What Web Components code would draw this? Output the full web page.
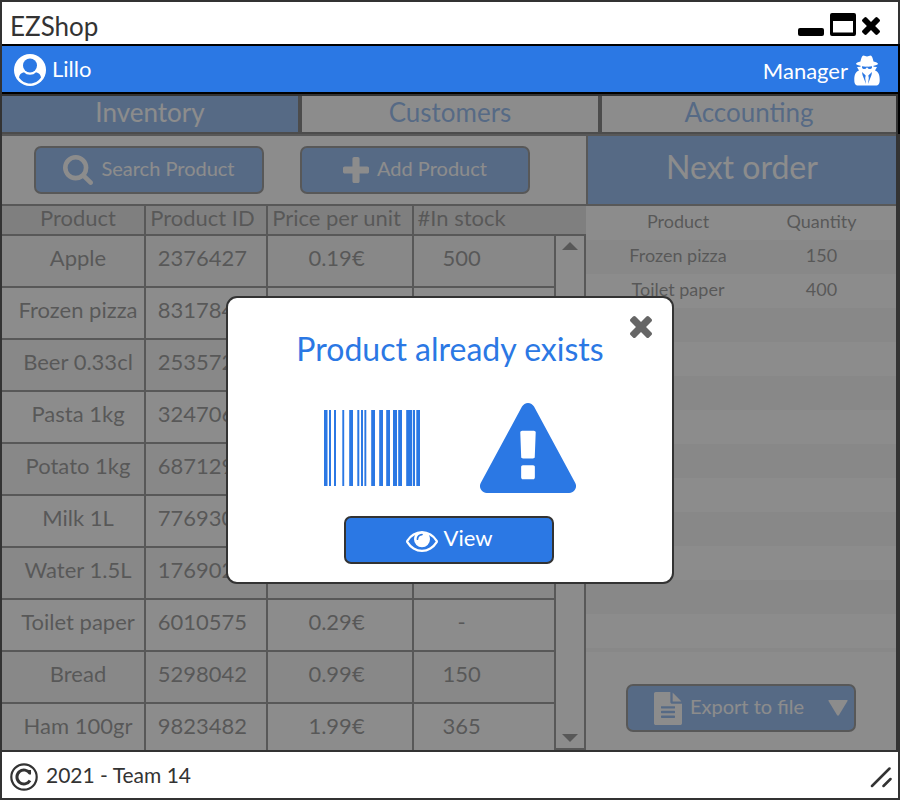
<!DOCTYPE html>
<html lang="en">
<head>
<meta charset="utf-8">
<meta name="viewport" content="width=device-width, initial-scale=1">
<title>EZShop</title>
<style>
  :root { --ink: #333; --blue: #2b78e4; --line: 2px solid #333; }
  body { margin: 0; font-family: Lato, "Liberation Sans", sans-serif; color: var(--ink); }
</style>
</head>
<body>
<ez-window>
  <title-bar slot="title">EZShop</title-bar>
  <user-bar slot="user" name="Lillo" role-name="Manager"></user-bar>
  <tab-bar></tab-bar>
  <split-view>
    <stock-panel slot="left"></stock-panel>
    <order-panel slot="right"></order-panel>
  </split-view>
  <modal-layer slot="modal" heading="Product already exists">
    <ez-icon name="barcode"></ez-icon>
    <ez-icon name="warning"></ez-icon>
    <ez-button slot="action" icon="eye" class="large">View</ez-button>
  </modal-layer>
  <footer-bar slot="footer">2021 - Team 14</footer-bar>
</ez-window>

<script>
const base = '<style>*,*::before,*::after{box-sizing:border-box}button{font:inherit;color:inherit;margin:0;padding:0;border:0;background:none;cursor:pointer}</style>';
function define(name, render, ready) {
  customElements.define(name, class extends HTMLElement {
    connectedCallback() {
      if (this.shadowRoot) return;
      const root = this.attachShadow({ mode: 'open' });
      const template = document.createElement('template');
      template.innerHTML = base + render(this);
      root.append(template.content.cloneNode(true));
      if (ready) ready(this, root);
    }
  });
}

const bars = [[0,3.5],[5,2],[10,2],[18.3,1.9],[25.2,3.8],[33.3,2],[37,2],[40.4,1.9],[47.2,3.8],[55.2,3.8],[62.2,3.8],[69,4],[74.2,3.8],[82.2,6],[89,2],[92.3,3.7]];
const icons = {
  search: [30, 30, '64 128 1664 1664', '<path d="M1216 832q0-185-131.5-316.5t-316.5-131.5-316.5 131.5-131.5 316.5 131.5 316.5 316.5 131.5 316.5-131.5 131.5-316.5zm512 832q0 52-38 90t-90 38q-54 0-90-38l-343-342q-179 124-399 124-143 0-273.5-55.5t-225-150-150-225-55.5-273.5 55.5-273.5 150-225 225-150 273.5-55.5 273.5 55.5 225 150 150 225 55.5 273.5q0 220-124 399l343 343q37 37 37 90z"/>'],
  plus: [26, 26, '192 128 1408 1408', '<path d="M1600 736v192q0 40-28 68t-68 28h-416v416q0 40-28 68t-68 28h-192q-40 0-68-28t-28-68v-416h-416q-40 0-68-28t-28-68v-192q0-40 28-68t68-28h416v-416q0-40 28-68t68-28h192q40 0 68 28t28 68v416h416q40 0 68 28t28 68z"/>'],
  times: [22, 22, '302 366 1188 1188', '<path d="M1490 1322q0 40-28 68l-136 136q-28 28-68 28t-68-28l-294-294-294 294q-28 28-68 28t-68-28l-136-136q-28-28-28-68t28-68l294-294-294-294q-28-28-28-68t28-68l136-136q28-28 68-28t68 28l294 294 294-294q28-28 68-28t68 28l136 136q28 28 28 68t-28 68l-294 294 294 294q28 28 28 68z"/>'],
  eye: [32, 21, '0 384 1792 1152', '<path d="M1664 960q-152-236-381-353 61 104 61 225 0 185-131.5 316.5t-316.5 131.5-316.5-131.5-131.5-316.5q0-121 61-225-229 117-381 353 133 205 333.5 326.5t434.5 121.5 434.5-121.5 333.5-326.5zm-720-384q0-20-14-34t-34-14q-125 0-214.5 89.5t-89.5 214.5q0 20 14 34t34 14 34-14 14-34q0-86 61-147t147-61q20 0 34-14t14-34zm848 384q0 34-20 69-140 230-376.5 368.5t-499.5 138.5-499.5-139-376.5-368q-20-35-20-69t20-69q140-229 376.5-368t499.5-139 499.5 139 376.5 368q20 35 20 69z"/>'],
  file: [28, 33, '128 0 1536 1792', '<path d="M1596 476q14 14 28 36h-472v-472q22 14 36 28zm-476 164h544v1056q0 40-28 68t-68 28h-1344q-40 0-68-28t-28-68v-1600q0-40 28-68t68-28h800v544q0 40 28 68t68 28zm160 736v-64q0-14-9-23t-23-9h-704q-14 0-23 9t-9 23v64q0 14 9 23t23 9h704q14 0 23-9t9-23zm0-256v-64q0-14-9-23t-23-9h-704q-14 0-23 9t-9 23v64q0 14 9 23t23 9h704q14 0 23-9t9-23zm0-256v-64q0-14-9-23t-23-9h-704q-14 0-23 9t-9 23v64q0 14 9 23t23 9h704q14 0 23-9t9-23z"/>'],
  warning: [96, 90, '0 0 1792 1664', '<path d="M1024 1375v-190q0-14-9.500-23.500t-22.500-9.500h-192q-13 0-22.500 9.500t-9.500 23.500v190q0 14 9.500 23.500t22.500 9.500h192q13 0 22.500-9.500t9.500-23.500zm-2-374l18-459q0-12-10-19-13-11-24-11h-220q-11 0-24 11-10 7-10 21l17 457q0 10 10 16.500t24 6.500h185q14 0 23.500-6.500t10.500-16.500zm-14-934l768 1408q35 63-2 126-17 29-46.500 46t-63.500 17h-1536q-34 0-63.500-17t-46.500-46q-37-63-2-126l768-1408q17-31 47-49t65-18 65 18 47 49z"/>'],
  barcode: [96, 76, '0 0 96 76', bars.map(([x, w]) => `<rect x="${x}" width="${w}" height="76"/>`).join('')],
  user: [32, 32, '0 0 32 32', '<circle cx="16" cy="16" r="16"/><circle cx="16" cy="11.500" r="7" fill="#2b78e4"/><path fill="#2b78e4" d="M10 18.300C7 18.700 5.300 21 5 23.600C7.500 27.400 11.500 29.600 16 29.600S24.500 27.400 27 23.600C26.700 21 25 18.700 22 18.300C20.500 20 18.500 20.800 16 20.800S11.500 20 10 18.300Z"/>'],
  secret: [26, 31, '0 0 26 31', '<path fill-rule="evenodd" d="M9.500.5C8 .5 7 4 6.500 6.500C4 7 2 8 2 8.800C2 9.800 5 10.500 6.500 10.800L6.500 11.800L3 12L5 15.500C1.500 17 .3 19.500.3 25C.3 28.500 1.200 30.500 4.500 30.500H21.500C24.800 30.500 25.700 28.500 25.700 25C25.700 19.500 24.500 17 21 15.500L23 12L19.500 11.800L19.500 10.800C21 10.500 24 9.800 24 8.800C24 8 22 7 19.500 6.500C19 4 18 .5 16.500.5C15.500.5 14.300 1.500 13 1.500S10.500.5 9.500.5ZM8 11.200L12 11.700Q13 11.300 14 11.700L18 11.200V12.500Q17.500 14 16 14Q14 14 13.300 12.500H12.700Q12 14 10 14Q8.500 14 8 12.500ZM8 17L11.700 20.500L11.200 23L12 29L8.500 20ZM18 17L14.300 20.500L14.800 23L14 29L17.500 20Z"/>'],
  minimize: [26, 8, '0 0 26 8', '<rect width="26" height="8" rx="2"/>'],
  maximize: [26, 23, '0 0 26 23', '<path fill-rule="evenodd" d="M2 0H24Q26 0 26 2V21Q26 23 24 23H2Q0 23 0 21V2Q0 0 2 0ZM3 8V19.500H23V8Z"/>'],
  copyright: [28, 28, '0 0 28 28', '<g fill="none" stroke="currentColor"><circle cx="14" cy="14" r="12.700" stroke-width="2.200"/><path d="M20 10.500A7 7 0 1 0 20 17.500" stroke-width="3"/><path d="M20 7V11.500" stroke-width="2"/></g>'],
  grip: [22, 22, '0 0 22 22', '<path d="M2 20L19.500 2.500M13.500 20L20.500 13" fill="none" stroke="currentColor" stroke-width="2.500" stroke-linecap="round"/>'],
  caret: [20, 16, '0 0 20 16', '<path d="M1 0H19Q20 0 19.500 1L11 15Q10 16.500 9 15L.5 1Q0 0 1 0Z"/>'],
  up: [16, 8, '0 0 16 8', '<path d="M0 8L8 0L16 8Z"/>'],
  down: [16, 8, '0 0 16 8', '<path d="M0 0L8 8L16 0Z"/>']
};
define('ez-icon', el => {
  const [w, h, box, art] = icons[el.getAttribute('name')];
  return `<style>:host{display:inline-flex;flex:none}svg{display:block;fill:currentColor}</style>
  <svg width="${w}" height="${h}" viewBox="${box}" preserveAspectRatio="none" aria-hidden="true">${art}</svg>`;
});

define('ez-button', el => `<style>
  :host{display:block;width:230px;font-size:20px;line-height:24px;color:#fff}
  :host(.large){width:210px;font-size:22px}
  button{width:100%;height:48px;display:flex;align-items:center;justify-content:center;gap:8px;background:var(--blue);border:var(--line);border-radius:7px}
  span{padding-bottom:4px}
  :host(.large) button{gap:6px;padding-top:2px}
  :host(.large) span{padding-bottom:6px}
  :host([menu]) button{justify-content:flex-start;padding:0 6px 0 26px}
  .caret{margin-left:auto}
</style><button type="button"${el.hasAttribute('menu') ? ' aria-haspopup="menu"' : ''}><ez-icon name="${el.getAttribute('icon')}"></ez-icon><span><slot></slot></span>${el.hasAttribute('menu') ? '<ez-icon class="caret" name="caret"></ez-icon>' : ''}</button>`);

define('ez-window', () => `<style>
  :host{display:flex;flex-direction:column;height:100vh;min-height:640px;min-width:720px;border:var(--line);background:#fff;box-sizing:border-box}
  main{flex:1;min-height:0;display:flex;flex-direction:column;position:relative;border-top:var(--line);border-right:var(--line)}
</style><slot name="title"></slot><slot name="user"></slot><main><slot></slot><slot name="modal"></slot></main><slot name="footer"></slot>`);

define('title-bar', () => `<style>
  :host{display:block}
  header{display:flex;align-items:center;height:42px;padding:6px 18px 0 8px}
  h1{flex:1;margin:0;font-size:26px;font-weight:400;line-height:32px}
  div{display:flex;align-items:flex-end;gap:6px;height:24px;margin-bottom:4px;color:#000}
  button{display:flex}
</style><header><h1><slot></slot></h1><div>
<button type="button" aria-label="Minimize"><ez-icon name="minimize"></ez-icon></button>
<button type="button" aria-label="Maximize"><ez-icon name="maximize"></ez-icon></button>
<button type="button" aria-label="Close"><svg width="18" height="20" viewBox="302 366 1188 1188" aria-hidden="true">${icons.times[3]}</svg></button></div></header>`);

define('user-bar', el => `<style>
  :host{display:block;margin-right:-2px}
  div{display:flex;align-items:center;justify-content:space-between;height:50px;padding:2px 18px 0 12px;border:2px solid #000;border-left:0;background:var(--blue);color:#fff;font-size:22px;line-height:26px}
  span{display:flex;align-items:center;gap:6px}
  b{font-weight:400;padding-bottom:2px}
  .role b{padding:2px 0 0}
</style><div><span><ez-icon name="user"></ez-icon><b>${el.getAttribute('name')}</b></span>
<span class="role"><b>${el.getAttribute('role-name')}</b><ez-icon name="secret"></ez-icon></span></div>`);

define('tab-bar', () => `<style>
  :host{display:block;position:relative}
  :host::after{content:"";position:absolute;inset:-2px -4px 2px auto;width:2px;background:#000}
  nav{display:grid;grid-template-columns:296fr 296fr 294fr;column-gap:4px;background:#000;border-bottom:2px solid #000;box-shadow:0 2px var(--ink);margin-bottom:2px}
  button{height:36px;background:#fff;color:var(--blue);font-size:26px;line-height:32px;padding-bottom:4px}
  .on{background:var(--blue);color:#fff}
</style><nav role="tablist"><button role="tab" aria-selected="true" class="on">Inventory</button><button role="tab" aria-selected="false">Customers</button><button role="tab" aria-selected="false">Accounting</button></nav>`);

define('split-view', () => `<style>
  :host{flex:1;min-height:0;display:grid;grid-template-columns:584fr 310fr;grid-template-rows:minmax(0,1fr)}
</style><slot name="left"></slot><slot name="right"></slot>`);

const stock = [['Apple','2376427','0.19€','500'],['Frozen pizza','8317845','',''],['Beer 0.33cl','2535721','',''],['Pasta 1kg','3247065','',''],['Potato 1kg','6871294','',''],['Milk 1L','7769301','',''],['Water 1.5L','1769023','',''],['Toilet paper','6010575','0.29€','-'],['Bread','5298042','0.99€','150'],['Ham 100gr','9823482','1.99€','365']];
define('stock-panel', () => `<style>
  :host{display:flex;flex-direction:column;min-width:0;overflow:hidden}
  .tools{flex:none;display:flex;gap:36px;height:70px;padding:10px 32px;border-bottom:var(--line)}
  .list{flex:1;min-height:0;display:flex;background:#ccc}
  .rows{flex:1;min-width:0}
  table{width:100%;table-layout:fixed;border-collapse:separate;border-spacing:0;font-size:22px;line-height:24px}
  col:nth-child(1){width:26%}col:nth-child(2){width:22%}col:nth-child(3){width:26.400%}
  th,td{font-weight:400;text-align:center;white-space:nowrap;border-right:var(--line);border-bottom:var(--line);padding:0 7px 0 0}
  th{height:30px;padding-bottom:4px}
  td{height:52px;padding-bottom:6px;background:#fff}
  tr:nth-child(odd) td{background:#eee}
  th:first-child,td:first-child{padding-left:10px;padding-right:0}
  td:last-child{padding-right:45px}
  th:last-child{padding-right:47px;border-right:0}
  .bar{width:30px;margin-top:28px;display:flex;flex-direction:column;justify-content:space-between;background:#fff;border:var(--line);border-left:0;color:var(--ink)}
  .bar button{display:flex;justify-content:center;padding:6px 0}
</style><div class="tools"><ez-button icon="search">Search Product</ez-button><ez-button icon="plus">Add Product</ez-button></div>
<div class="list"><div class="rows"><table><colgroup><col><col><col><col></colgroup><thead><tr><th>Product</th><th>Product ID</th><th>Price per unit</th><th>#In stock</th></tr></thead>
<tbody>${stock.map(r => `<tr>${r.map(c => `<td>${c}</td>`).join('')}</tr>`).join('')}</tbody></table></div>
<div class="bar"><button type="button" aria-label="Scroll up"><ez-icon name="up"></ez-icon></button><button type="button" aria-label="Scroll down"><ez-icon name="down"></ez-icon></button></div></div>`);

define('order-panel', () => `<style>
  :host{display:flex;flex-direction:column;min-width:0}
  h2{margin:0;height:70px;font-size:32px;line-height:62px;font-weight:400;text-align:center;color:#fff;background:var(--blue);border-left:var(--line);border-bottom:var(--line)}
  .list{flex:1;background:repeating-linear-gradient(#fff 0 34px,#eee 34px 68px)}
  table{width:100%;table-layout:fixed;border-collapse:collapse;font-size:18px;line-height:22px}
  th,td{height:34px;padding:0 0 4px;font-weight:400;text-align:center}
  th:first-child,td:first-child{width:60%;padding-right:2px}
  th:last-child,td:last-child{padding-right:25px}
  .export{display:flex;justify-content:center;padding:32px 0 18px;background:#fff}
</style><h2>Next order</h2><div class="list"><table><thead><tr><th>Product</th><th>Quantity</th></tr></thead><tbody><tr><td>Frozen pizza</td><td>150</td></tr><tr><td>Toilet paper</td><td>400</td></tr></tbody></table></div>
<div class="export"><ez-button icon="file" menu>Export to file</ez-button></div>`);

define('modal-layer', el => `<style>
  :host{position:absolute;inset:0;display:flex;align-items:center;justify-content:center;padding:34px 0 0 2px;background:rgba(102,102,102,.75);box-sizing:border-box}
  section{position:relative;display:flex;flex-direction:column;align-items:center;width:448px;padding:31px 0 18px;background:#fff;border:var(--line);border-radius:11px;color:var(--blue)}
  h2{margin:0 0 34px;font-size:32px;line-height:40px;font-weight:400}
  .art{display:flex;align-items:center;gap:60px;margin-bottom:23px}
  .close{position:absolute;top:18px;right:20px;display:flex;color:#666}
  ::slotted([slot=action]){margin-right:2px}
</style><section role="dialog" aria-label="${el.getAttribute('heading')}"><button type="button" class="close" aria-label="Close dialog"><ez-icon name="times"></ez-icon></button>
<h2>${el.getAttribute('heading')}</h2><div class="art"><slot></slot></div><slot name="action"></slot></section>`,
(el, root) => root.querySelector('.close').addEventListener('click', () => el.remove()));

define('footer-bar', () => `<style>
  :host{display:block}
  footer{display:flex;align-items:center;gap:8px;height:48px;padding:4px 6px 0 8px;border-top:var(--line);font-size:21px;line-height:26px}
  span{flex:1;padding-bottom:4px}
</style><footer><ez-icon name="copyright"></ez-icon><span><slot></slot></span><ez-icon name="grip"></ez-icon></footer>`);
</script>
</body>
</html>
